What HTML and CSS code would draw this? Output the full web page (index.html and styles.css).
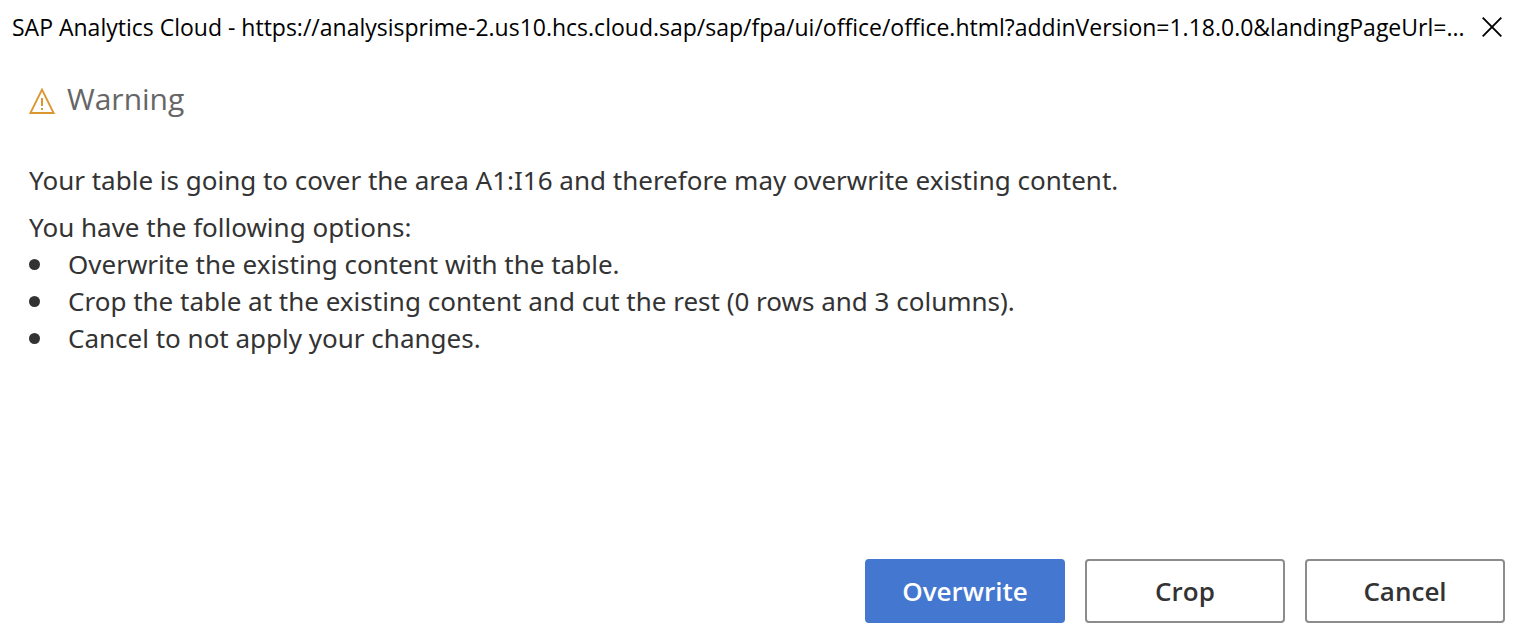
FILE: index.html
```html
<!DOCTYPE html>
<html lang="en">
<head>
<meta charset="utf-8">
<title>SAP Analytics Cloud</title>
<link rel="stylesheet" href="styles.css">
</head>
<body>
<div class="dialog" role="alertdialog" aria-labelledby="heading">
  <header class="titlebar">
    <div class="titlebar-text">SAP Analytics Cloud - https://analysisprime-2.us10.hcs.cloud.sap/sap/fpa/ui/office/office.html?addinVersion=1.18.0.0&amp;landingPageUrl=...</div>
    <button class="close" type="button" aria-label="Close">
      <svg viewBox="0 0 20 20" width="20" height="20"><path d="M0.7 0.7 19.3 19.3M19.3 0.7 0.7 19.3" fill="none" stroke="#000" stroke-width="1.9"/></svg>
    </button>
  </header>
  <main class="content">
    <div class="heading-row">
      <svg class="warn-icon" viewBox="0 0 26 26" width="26" height="26"><path d="M13 1.7 24.6 25H1.4Z" fill="none" stroke="#dc962f" stroke-width="1.9" stroke-linejoin="miter"/><path d="M13 10v8M13 20v2" stroke="#dc962f" stroke-width="2"/></svg>
      <h1 class="heading" id="heading">Warning</h1>
    </div>
    <p class="message">Your table is going to cover the area A1:I16 and therefore may overwrite existing content.</p>
    <p class="intro">You have the following options:</p>
    <ul class="options">
      <li>Overwrite the existing content with the table.</li>
      <li>Crop the table at the existing content and cut the rest (0 rows and 3 columns).</li>
      <li>Cancel to not apply your changes.</li>
    </ul>
  </main>
  <footer class="actions">
    <button class="btn btn-primary" type="button">Overwrite</button>
    <button class="btn" type="button">Crop</button>
    <button class="btn" type="button">Cancel</button>
  </footer>
</div>
</body>
</html>
```
FILE: styles.css
```css
* { box-sizing: border-box; }
body { margin: 0; background: #fff; font-family: "Segoe UI", "Open Sans", "Noto Sans", sans-serif; }
.dialog { min-height: 100vh; display: flex; flex-direction: column; color: #333; }
.titlebar { display: flex; align-items: center; justify-content: space-between; padding: 0 21px 0 12px; height: 54px; color: #000; }
.titlebar-text { font-size: 23px; line-height: 32px; white-space: nowrap; }
.close { display: flex; padding: 0; border: 0; background: none; }
.content { flex: 1; padding: 22px 29px 0; font-family: "Segoe UI", "Noto Sans", sans-serif; font-size: 26px; line-height: 37px; }
.heading-row { display: flex; align-items: center; gap: 12px; height: 46px; }
.warn-icon { margin-top: 4px; }
.heading { margin: 0; font-family: "Segoe UI", "Open Sans", sans-serif; font-size: 30px; font-weight: 400; line-height: 44px; color: #666; }
.message, .intro { margin: 0; }
.message { margin-top: 40px; }
.intro { margin-top: 10px; }
.options { list-style: none; margin: 0; padding: 0; }
.options li { display: flex; align-items: center; gap: 28px; }
.options li::before { content: ""; width: 11px; height: 11px; border-radius: 50%; background: #333; }
.actions { display: flex; justify-content: flex-end; gap: 20px; padding: 0 18px 8px; }
.btn { width: 200px; height: 64px; border: 2px solid #8c8c8c; border-radius: 4px; background: #fff; color: #333; font: inherit; font-size: 26px; font-weight: 600; }
.btn-primary { background: #4477d0; border-color: #4477d0; color: #fff; }
```
